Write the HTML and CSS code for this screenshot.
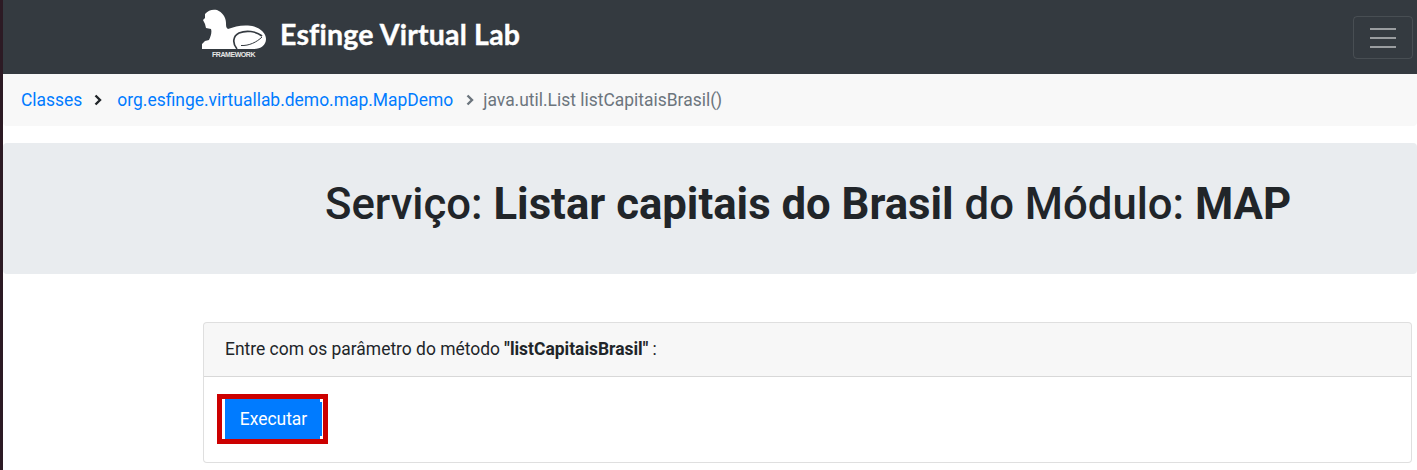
FILE: index.html
```html
<!DOCTYPE html>
<html lang="pt">
<head>
<meta charset="utf-8">
<title>Esfinge Virtual Lab</title>
<link rel="stylesheet" href="styles.css">
</head>
<body>
<div class="strip"></div>
<div class="page">
  <nav class="navbar">
    <a class="brand" href="#">
      <span class="logo">
        <svg width="70" height="46" viewBox="200 6 70 46">
          <path fill="#fff" d="M205 14 C208 10 213 9 217 10 C222 12 226 17 226 23 C226 26 226 28 228 29 C234 27 240 25 248 25.5 C258 26 266 32 266 39 C266 45 261 49 254 49 L202 49 L202 44 L205 41 L209 40 C211 36 212 32 211 29 L206 28 L205 24 L203 20 L205 18 Z"/>
          <path fill="none" stroke="#343a40" stroke-width="1.7" d="M237 49 C232 43 233 36 239 33 C246 30 256 31 262 36"/>
          <path fill="none" stroke="#343a40" stroke-width="1" d="M241 45.5 C249 46 257 42 262 37"/>
        </svg>
        <span class="logo-caption">FRAMEWORK</span>
      </span>
      <span class="brand-name">Esfinge Virtual Lab</span>
    </a>
    <button class="toggler" type="button" aria-label="Menu"><span class="toggler-bars"></span></button>
  </nav>
  <ol class="breadcrumb">
    <li><a href="#">Classes</a></li>
    <li class="sep sep-dark"><svg width="10" height="12" viewBox="0 0 10 12"><path fill="none" stroke="currentColor" stroke-width="2.4" d="M2.5 1.5 L7 6 L2.5 10.5"/></svg></li>
    <li><a href="#">org.esfinge.virtuallab.demo.map.MapDemo</a></li>
    <li class="sep sep-grey"><svg width="10" height="12" viewBox="0 0 10 12"><path fill="none" stroke="currentColor" stroke-width="2.4" d="M2.5 1.5 L7 6 L2.5 10.5"/></svg></li>
    <li class="current">java.util.List listCapitaisBrasil()</li>
  </ol>
  <header class="jumbotron">
    <h1>Serviço: <strong>Listar capitais do Brasil</strong> do Módulo: <strong>MAP</strong></h1>
  </header>
  <section class="card">
    <div class="card-header">Entre com os parâmetro do método <strong>"listCapitaisBrasil"</strong> :</div>
    <div class="card-body">
      <span class="highlight"><button class="btn" type="button">Executar</button></span>
    </div>
  </section>
</div>
</body>
</html>
```
FILE: styles.css
```css
* { box-sizing: border-box; }
html, body { margin: 0; height: 100%; overflow: hidden; }
body {
  display: flex;
  background: #fff;
  color: #212529;
  font-family: Roboto, "Liberation Sans", sans-serif;
  font-size: 17.45px;
  line-height: 26px;
}
.strip { flex: 0 0 3px; background: #2c1a24; }
.page { flex: 1; min-width: 0; }
.navbar {
  height: 74px;
  background: #343a40;
  display: flex;
  align-items: center;
  justify-content: space-between;
  padding: 0 4px 0 197px;
}
.brand { display: flex; align-items: center; gap: 10px; color: #fff; text-decoration: none; }
.logo { position: relative; display: block; width: 70px; height: 62px; }
.logo svg { display: block; }
.logo-caption {
  position: absolute;
  left: 12px;
  top: 44px;
  font: 700 7px/9px "Liberation Sans", sans-serif;
  letter-spacing: -0.45px;
  color: #e6e6e6;
}
.brand-name {
  font-family: Lato, sans-serif;
  font-weight: 700;
  font-size: 28.5px;
  line-height: 34px;
  letter-spacing: 0.2px;
  -webkit-text-stroke: 0.4px #fff;
  position: relative;
  top: -3px;
}
.toggler {
  width: 60px;
  height: 43px;
  margin-top: 1px;
  padding: 0;
  background: transparent;
  border: 1px solid rgba(255, 255, 255, 0.1);
  border-radius: 4px;
  display: flex;
  align-items: center;
  justify-content: center;
}
.toggler-bars {
  display: block;
  width: 26px;
  height: 20px;
  border-top: 2px solid #9a9da0;
  border-bottom: 2px solid #9a9da0;
  position: relative;
}
.toggler-bars::before {
  content: "";
  position: absolute;
  left: 0;
  right: 0;
  top: 7px;
  height: 2px;
  background: #9a9da0;
}
.breadcrumb {
  list-style: none;
  margin: 0 0 17px;
  height: 52px;
  padding: 0 18px;
  background: #f8f8f8;
  border-radius: 0 0 4px 4px;
  display: flex;
  align-items: center;
}
.breadcrumb a { color: #007bff; text-decoration: none; }
.sep { display: flex; width: 35px; padding-left: 11px; }
.sep-grey { width: 30px; padding-left: 12px; color: #6c757d; }
.sep-dark { color: #212529; }
.current { color: #6c757d; }
.jumbotron {
  height: 131px;
  margin-bottom: 48px;
  padding: 35px 0 0 322px;
  background: #e9ecef;
  border-radius: 4px;
}
h1 {
  margin: 0;
  font-size: 43.7px;
  line-height: 52px;
  font-weight: 500;
  white-space: nowrap;
}
h1 strong { font-weight: 700; }
.card {
  margin: 0 5px 0 200px;
  height: 141px;
  border: 1px solid rgba(0, 0, 0, 0.125);
  border-radius: 4px;
  background: #fff;
}
.card-header {
  height: 54px;
  padding: 13px 21px 0;
  background: rgba(0, 0, 0, 0.03);
  border-bottom: 1px solid rgba(0, 0, 0, 0.125);
  border-radius: 3px 3px 0 0;
}
.card-body { padding: 17px 13px; }
.highlight {
  display: block;
  width: 111px;
  height: 50px;
  padding: 0 0 0 3px;
  border: 5px solid #c00;
  background: #fff;
}
.btn {
  display: block;
  width: 97px;
  height: 40px;
  margin: 0;
  padding: 0;
  border: 0;
  border-radius: 0;
  background:
    linear-gradient(#fff, #fff) right top / 2px 3px no-repeat,
    linear-gradient(#fff, #fff) right bottom / 2px 3px no-repeat,
    #007bff;
  color: #fff;
  font: 400 17.45px/26px Roboto, "Liberation Sans", sans-serif;
}
```
